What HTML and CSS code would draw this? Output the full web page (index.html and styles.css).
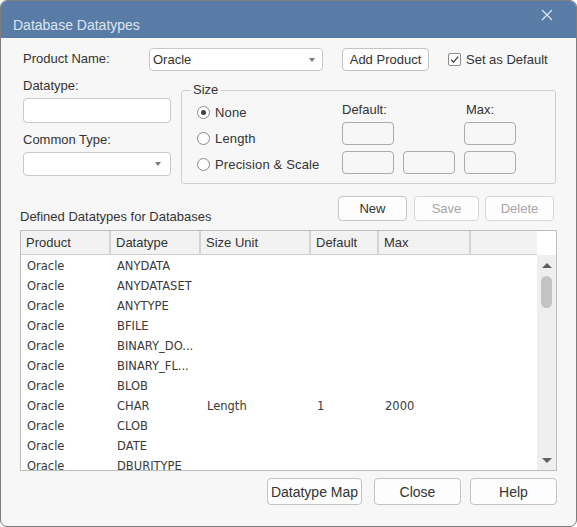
FILE: index.html
```html
<!DOCTYPE html>
<html lang="en">
<head>
<meta charset="utf-8">
<title>Database Datatypes</title>
<link rel="stylesheet" href="styles.css">
</head>
<body>
<div class="window">
  <div class="titlebar">
    <span class="title">Database Datatypes</span>
    <svg class="close" width="12" height="12" viewBox="0 0 12 12"><path d="M1 1 L11 11 M11 1 L1 11" stroke="#dfe6ef" stroke-width="1.3" fill="none"/></svg>
  </div>
  <div class="content">
    <div class="row1">
      <span class="lbl lbl-product">Product Name:</span>
      <div class="select sel-product"><span class="sel-text">Oracle</span><i class="caret"></i></div>
      <button class="btn btn-add">Add Product</button>
      <label class="check">
        <span class="box"><svg width="11" height="11" viewBox="0 0 11 11"><path d="M2 5.6 L4.4 8.2 L9.2 2.6" stroke="#444" stroke-width="1.3" fill="none"/></svg></span>
        Set as Default
      </label>
    </div>
    <div class="row2">
      <div class="leftcol">
        <span class="lbl">Datatype:</span>
        <div class="input inp-datatype"></div>
        <span class="lbl lbl-common">Common Type:</span>
        <div class="select sel-common"><span class="sel-text"></span><i class="caret"></i></div>
      </div>
      <fieldset class="size">
        <legend>Size</legend>
        <div class="size-inner">
          <div class="radios">
            <div class="radio-row"><span class="radio on"></span>None</div>
            <div class="radio-row"><span class="radio"></span>Length</div>
            <div class="radio-row"><span class="radio"></span>Precision &amp; Scale</div>
          </div>
          <div class="size-grid">
            <span class="glbl">Default:</span>
            <span></span>
            <span class="glbl glbl-max">Max:</span>
            <div class="sbox"></div>
            <span></span>
            <div class="sbox"></div>
            <div class="sbox"></div>
            <div class="sbox"></div>
            <div class="sbox"></div>
          </div>
        </div>
      </fieldset>
    </div>
    <div class="row3">
      <span class="lbl lbl-defined">Defined Datatypes for Databases</span>
      <div class="actions">
        <button class="btn btn-new">New</button>
        <button class="btn btn-save disabled">Save</button>
        <button class="btn btn-delete disabled">Delete</button>
      </div>
    </div>
    <div class="table">
      <div class="thead">
        <div class="hcells">
          <span class="hc">Product</span>
          <span class="hc">Datatype</span>
          <span class="hc">Size Unit</span>
          <span class="hc">Default</span>
          <span class="hc">Max</span>
          <span class="hc hc-last"></span>
        </div>
        <div class="hcorner"></div>
      </div>
      <div class="tbody">
        <div class="rows">
          <div class="tr"><span>Oracle</span><span>ANYDATA</span><span></span><span></span><span></span><span></span></div>
          <div class="tr"><span>Oracle</span><span>ANYDATASET</span><span></span><span></span><span></span><span></span></div>
          <div class="tr"><span>Oracle</span><span>ANYTYPE</span><span></span><span></span><span></span><span></span></div>
          <div class="tr"><span>Oracle</span><span>BFILE</span><span></span><span></span><span></span><span></span></div>
          <div class="tr"><span>Oracle</span><span>BINARY_DO...</span><span></span><span></span><span></span><span></span></div>
          <div class="tr"><span>Oracle</span><span>BINARY_FL...</span><span></span><span></span><span></span><span></span></div>
          <div class="tr"><span>Oracle</span><span>BLOB</span><span></span><span></span><span></span><span></span></div>
          <div class="tr"><span>Oracle</span><span>CHAR</span><span>Length</span><span>1</span><span>2000</span><span></span></div>
          <div class="tr"><span>Oracle</span><span>CLOB</span><span></span><span></span><span></span><span></span></div>
          <div class="tr"><span>Oracle</span><span>DATE</span><span></span><span></span><span></span><span></span></div>
          <div class="tr"><span>Oracle</span><span>DBURITYPE</span><span></span><span></span><span></span><span></span></div>
        </div>
        <div class="scrollbar">
          <i class="arrow-up"></i>
          <div class="thumb"></div>
          <i class="arrow-down"></i>
        </div>
      </div>
    </div>
    <div class="footer">
      <button class="btn btn-map">Datatype Map</button>
      <button class="btn btn-close">Close</button>
      <button class="btn btn-help">Help</button>
    </div>
  </div>
</div>
</body>
</html>
```
FILE: styles.css
```css
html, body {
  margin: 0;
  padding: 0;
  background: #ffffff;
}

.window {
  width: 577px;
  height: 527px;
  box-sizing: border-box;
  border: 1px solid #7d7d7d;
  border-radius: 7px;
  background: #f7f7f7;
  overflow: hidden;
  display: flex;
  flex-direction: column;
  font-family: "Liberation Sans", Arial, sans-serif;
  font-size: 13px;
  color: #333;
}

.titlebar {
  height: 37px;
  flex: none;
  background: #587ca6;
  display: flex;
  justify-content: space-between;
  align-items: flex-start;
}

.title {
  margin: 16px 0 0 12px;
  line-height: 16px;
  font-size: 14px;
  color: #dce5ef;
}

.close {
  margin: 8px 23px 0 0;
}

.content {
  padding: 0 19px;
}

.lbl {
  line-height: 16px;
}

/* Row 1 */
.row1 {
  display: flex;
  align-items: center;
  height: 23px;
  margin-top: 10px;
  padding-left: 3px;
}

.lbl-product {
  width: 126px;
  flex: none;
  margin-top: -2px;
}

.select {
  box-sizing: border-box;
  background: #fff;
  border: 1px solid #c9c9c9;
  border-radius: 4px;
  display: flex;
  align-items: center;
  justify-content: space-between;
  padding: 0 7px 0 3px;
}

.sel-text {
  line-height: 16px;
  margin-top: 1px;
}

.caret {
  width: 0;
  height: 0;
  border-left: 3px solid transparent;
  border-right: 3px solid transparent;
  border-top: 4px solid #7a7a7a;
}

.sel-product {
  width: 174px;
  height: 23px;
}

.btn {
  box-sizing: border-box;
  font-family: "Liberation Sans", Arial, sans-serif;
  font-size: 13px;
  color: #333;
  background: #fdfdfd;
  border: 1px solid #c4c4c4;
  border-radius: 4px;
  padding: 0;
  margin: 0;
}

.btn.disabled {
  color: #a6a6a6;
  border-color: #d6d6d6;
}

.btn-add {
  margin-left: 19px;
  width: 87px;
  height: 23px;
}

.check {
  display: flex;
  align-items: center;
  margin-left: 19px;
  gap: 5px;
}

.box {
  box-sizing: border-box;
  width: 13px;
  height: 13px;
  border: 1px solid #8c8c8c;
  border-radius: 2px;
  background: #fff;
  display: flex;
  align-items: center;
  justify-content: center;
}

/* Row 2 */
.row2 {
  display: flex;
  align-items: flex-start;
  margin-top: 7px;
  padding-left: 3px;
}

.leftcol {
  width: 148px;
  flex: none;
  display: flex;
  flex-direction: column;
}

.input {
  box-sizing: border-box;
  background: #fff;
  border: 1px solid #c9c9c9;
  border-radius: 4px;
}

.inp-datatype {
  height: 25px;
  margin-top: 4px;
}

.lbl-common {
  margin-top: 9px;
}

.sel-common {
  height: 24px;
  margin-top: 4px;
  padding-right: 9px;
}

.size {
  margin: 4px 0 0 10px;
  padding: 0;
  width: 375px;
  box-sizing: border-box;
  border: 1px solid #cfcfcf;
  border-radius: 3px;
  min-width: 0;
}

.size legend {
  margin-left: 9px;
  padding: 0 3px 0 2px;
  line-height: 16px;
}

.size-inner {
  display: flex;
  padding: 1px 0 6px 15px;
}

.radios {
  width: 145px;
  flex: none;
  display: flex;
  flex-direction: column;
}

.radio-row {
  height: 26px;
  display: flex;
  align-items: center;
  gap: 5px;
  letter-spacing: 0.15px;
}

.radio {
  box-sizing: border-box;
  width: 13px;
  height: 13px;
  border: 1px solid #8a8a8a;
  border-radius: 50%;
  background: #fff;
  display: flex;
  align-items: center;
  justify-content: center;
}

.radio.on::after {
  content: "";
  width: 5px;
  height: 5px;
  border-radius: 50%;
  background: #404040;
}

.size-grid {
  display: grid;
  grid-template-columns: 52px 52px 52px;
  grid-template-rows: 23px 26px 26px;
  column-gap: 9px;
  row-gap: 0;
  align-content: start;
}

.size-grid .glbl {
  align-self: center;
  line-height: 16px;
  margin-top: -1px;
}

.glbl-max {
  padding-left: 2px;
}

.sbox {
  box-sizing: border-box;
  height: 23px;
  border: 1px solid #ababab;
  border-radius: 4px;
  background: #f7f7f7;
}

.size-grid > :nth-child(n+7) {
  margin-top: 3px;
}

/* Row 3 */
.row3 {
  display: flex;
  align-items: flex-start;
  margin-top: 12px;
}

.lbl-defined {
  margin-top: 13px;
}

.actions {
  margin-left: auto;
  margin-right: 3px;
  display: flex;
}

.actions .btn {
  height: 25px;
}

.btn-new { width: 69px; }
.btn-save { width: 65px; margin-left: 7px; }
.btn-delete { width: 69px; margin-left: 6px; }

/* Table */
.table {
  margin-top: 5px;
  height: 241px;
  box-sizing: border-box;
  border: 1px solid #bdbdbd;
  background: #fff;
  display: flex;
  flex-direction: column;
}

.thead {
  height: 24px;
  flex: none;
  display: flex;
}

.hcells {
  flex: 1;
  display: grid;
  grid-template-columns: 90px 90px 110px 68px 92px 1fr;
  background: #f2f2f2;
  border-bottom: 1px solid #cfcfcf;
}

.hc {
  box-sizing: border-box;
  border-right: 2px solid #d4d4d4;
  padding-left: 5px;
  line-height: 24px;
}

.hc-last {
  border-right: none;
}

.hcorner {
  width: 19px;
  flex: none;
  background: #fff;
}

.tbody {
  flex: 1;
  display: flex;
  min-height: 0;
}

.rows {
  flex: 1;
  overflow: hidden;
  padding-top: 1px;
}

.tr {
  height: 20px;
  display: grid;
  grid-template-columns: 90px 90px 110px 68px 92px 1fr;
  font-family: "DejaVu Sans", Verdana, sans-serif;
  font-size: 11.5px;
  color: #3a3a3a;
}

.tr span {
  padding-left: 6px;
  line-height: 20px;
  white-space: nowrap;
  overflow: hidden;
}

.scrollbar {
  width: 19px;
  flex: none;
  background: #efefef;
  display: flex;
  flex-direction: column;
  align-items: center;
}

.arrow-up {
  margin-top: 8px;
  width: 0;
  height: 0;
  border-left: 5px solid transparent;
  border-right: 5px solid transparent;
  border-bottom: 5px solid #616161;
}

.thumb {
  margin-top: 8px;
  width: 11px;
  height: 32px;
  border-radius: 6px;
  background: #c3c3c3;
}

.arrow-down {
  margin-top: auto;
  margin-bottom: 7px;
  width: 0;
  height: 0;
  border-left: 5px solid transparent;
  border-right: 5px solid transparent;
  border-top: 5px solid #616161;
}

/* Footer */
.footer {
  margin-top: 7px;
  display: flex;
  justify-content: flex-end;
}

.footer .btn {
  height: 27px;
  font-size: 14px;
}

.btn-map { width: 95px; }
.btn-close { width: 87px; margin-left: 12px; }
.btn-help { width: 87px; margin-left: 9px; }
```
